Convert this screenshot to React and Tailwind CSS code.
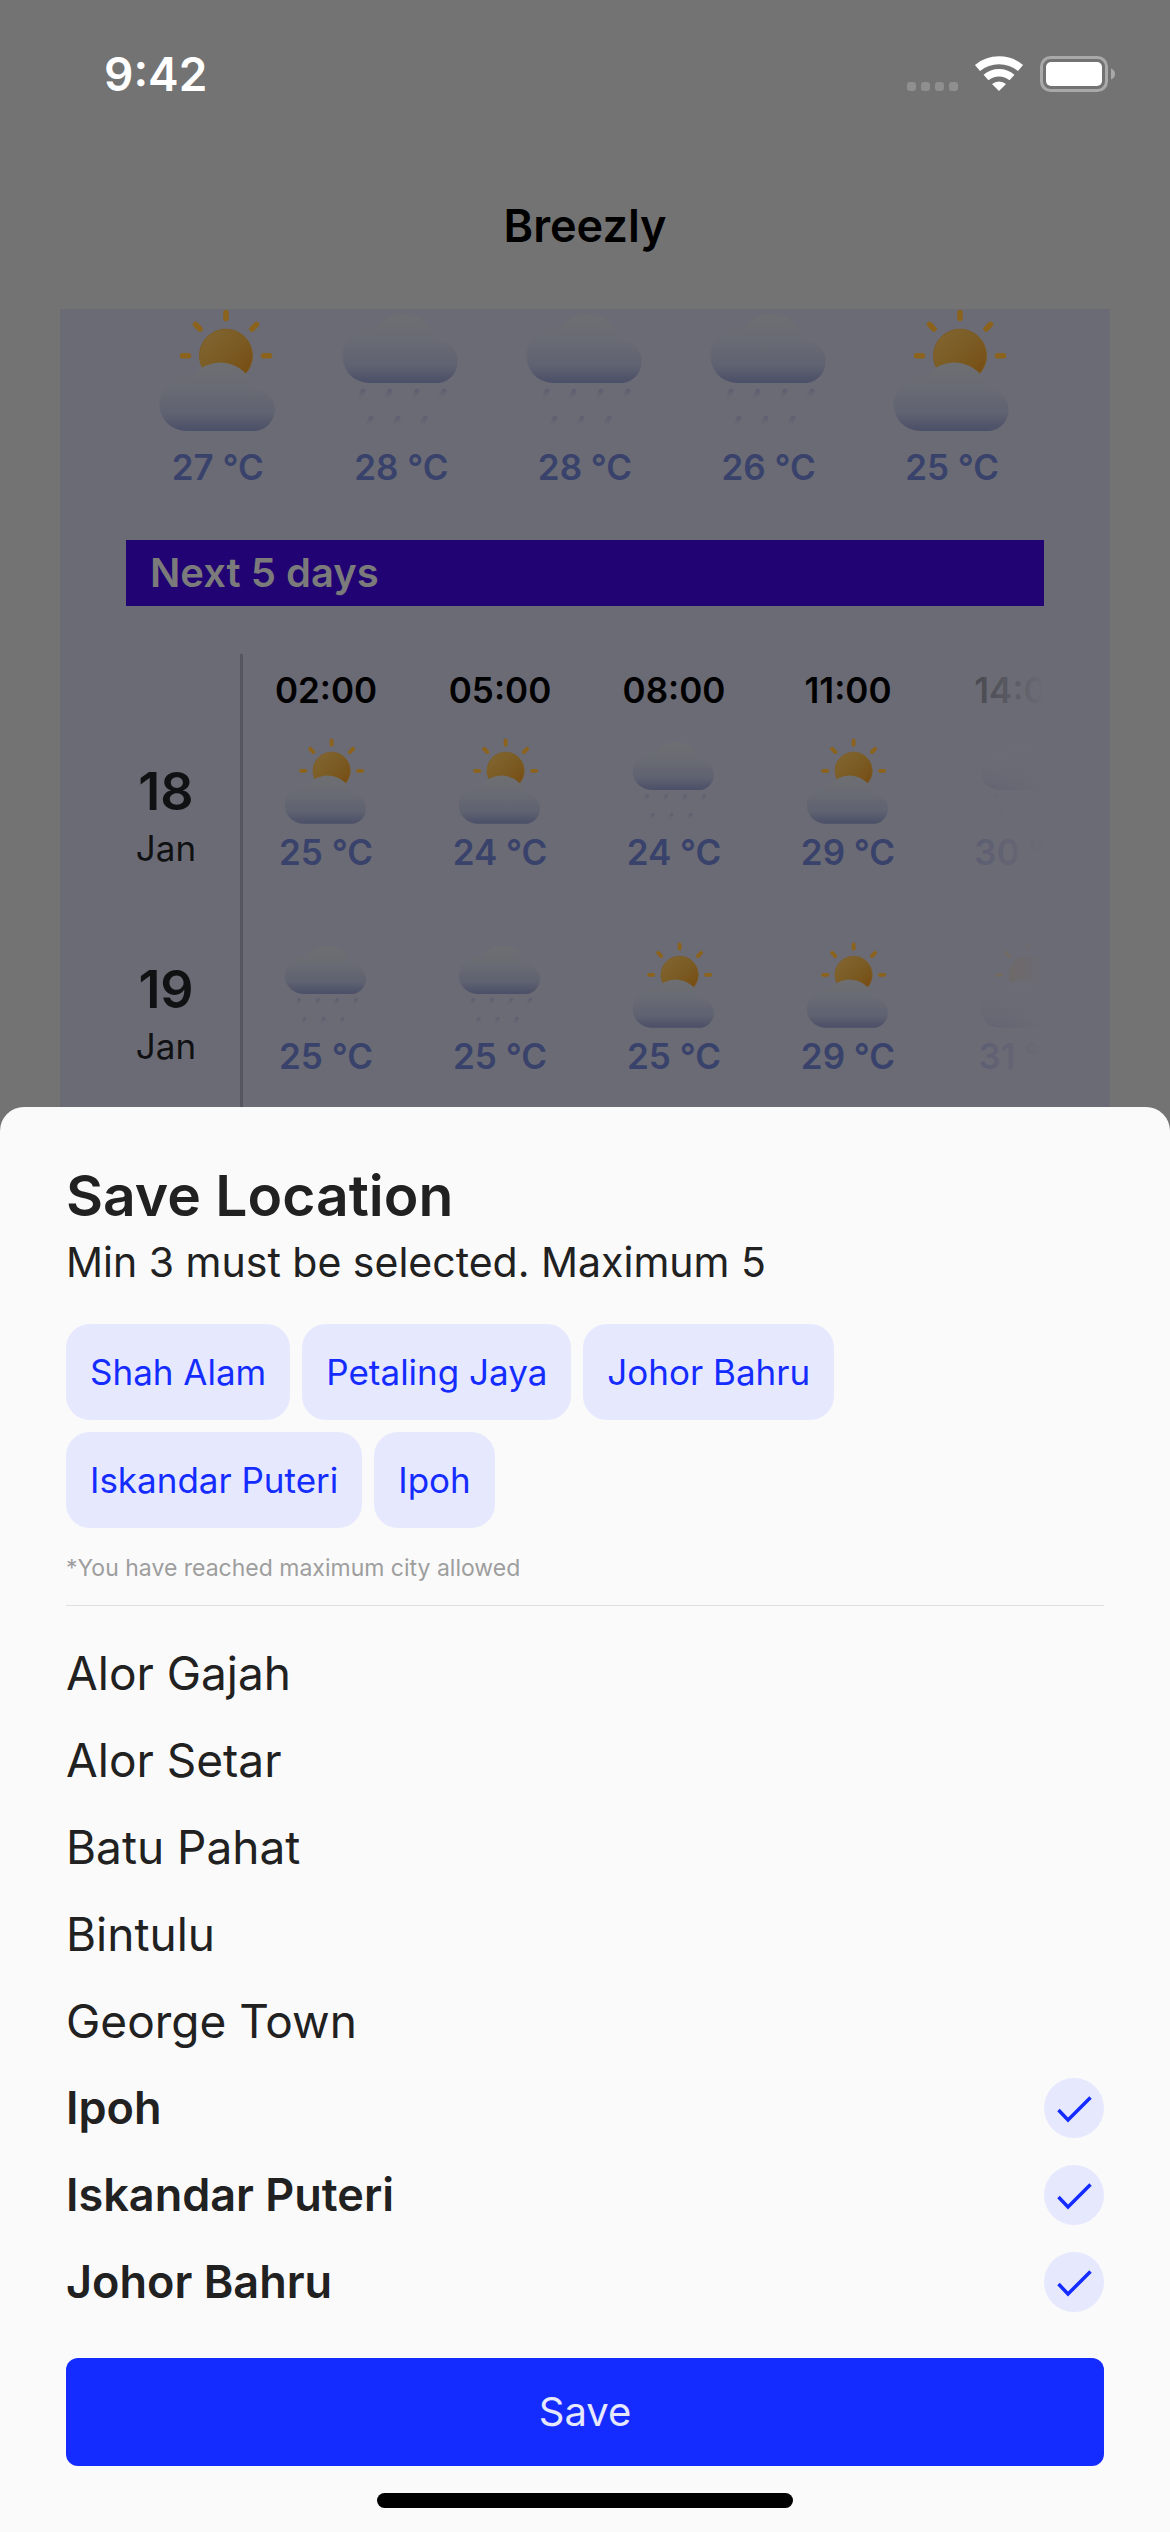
import { useState } from "react";

const HOURLY = [
  { icon: "sun", temp: "27 °C" },
  { icon: "rain", temp: "28 °C" },
  { icon: "rain", temp: "28 °C" },
  { icon: "rain", temp: "26 °C" },
  { icon: "sun", temp: "25 °C" },
];

const TIMES = ["02:00", "05:00", "08:00", "11:00", "14:00"];

const DAYS = [
  {
    day: "18",
    month: "Jan",
    slots: [
      { icon: "sun", temp: "25 °C" },
      { icon: "sun", temp: "24 °C" },
      { icon: "rain", temp: "24 °C" },
      { icon: "sun", temp: "29 °C" },
      { icon: "rain", temp: "30 °C" },
    ],
  },
  {
    day: "19",
    month: "Jan",
    slots: [
      { icon: "rain", temp: "25 °C" },
      { icon: "rain", temp: "25 °C" },
      { icon: "sun", temp: "25 °C" },
      { icon: "sun", temp: "29 °C" },
      { icon: "sun", temp: "31 °C" },
    ],
  },
];

const CITIES = [
  "Alor Gajah",
  "Alor Setar",
  "Batu Pahat",
  "Bintulu",
  "George Town",
  "Ipoh",
  "Iskandar Puteri",
  "Johor Bahru",
];

const MAX_CITIES = 5;

function GradientDefs() {
  return (
    <svg className="absolute h-0 w-0" aria-hidden="true">
      <defs>
        <linearGradient id="cloud" gradientUnits="userSpaceOnUse" x1="0" y1="52" x2="0" y2="122">
          <stop offset="0" stopColor="#6e6f72" />
          <stop offset="0.45" stopColor="#676a73" />
          <stop offset="0.75" stopColor="#5f6270" />
          <stop offset="1" stopColor="#4b4f68" />
        </linearGradient>
        <linearGradient id="sun" gradientUnits="userSpaceOnUse" x1="52" y1="25" x2="92" y2="68">
          <stop offset="0" stopColor="#80642f" />
          <stop offset="0.55" stopColor="#7a5a22" />
          <stop offset="1" stopColor="#774c12" />
        </linearGradient>
        <linearGradient id="drop" x1="0" y1="0" x2="0" y2="1">
          <stop offset="0" stopColor="#5f6171" />
          <stop offset="1" stopColor="#6a6a74" stopOpacity="0.2" />
        </linearGradient>
      </defs>
    </svg>
  );
}

function Cloud() {
  return (
    <g fill="url(#cloud)">
      <path d="M32 122A27 27 0 1 1 37.500 68.500A35 35 0 0 1 100 79A21.600 21.600 0 0 1 102 122Z" />
    </g>
  );
}

function WeatherIcon({ kind, className }) {
  if (kind === "sun") {
    return (
      <svg viewBox="0 0 128 128" className={className} role="img" aria-label="Partly cloudy">
        <g stroke="#8b631c" strokeWidth="5.500" strokeLinecap="round">
          <path d="M72 3.500V9.500M28.500 46.700H34.500M109.500 46.700H115.500M41.500 15.500L46 20M102.500 15.500L98 20" />
        </g>
        <circle cx="72" cy="46.700" r="26.500" fill="url(#sun)" stroke="#7e5c22" />
        <Cloud />
      </svg>
    );
  }
  return (
    <svg viewBox="0 0 128 128" className={className} role="img" aria-label="Rain">
      <g transform="translate(0 -48)">
        <Cloud />
      </g>
      <g fill="none" strokeWidth="5" strokeLinecap="round">
        <path stroke="url(#drop)" d="M26 82L22 91M53 82L49 91M80 82L76 91M107 82L103 91" />
        <path stroke="url(#drop)" d="M34 109L30 118M61 109L57 118M88 109L84 118" />
      </g>
    </svg>
  );
}

function StatusBar() {
  return (
    <header className="flex h-[148px] items-center justify-between pl-[104px] pr-[54px]">
      <time className="text-[46px] font-semibold leading-[56px] text-white">9:42</time>
      <div className="flex items-center">
        <svg viewBox="0 0 210 40" className="h-10 w-[210px]" role="img" aria-label="Wi-Fi on, battery full">
          <g fill="#8f8f8f">
            <rect x="1" y="28" width="9" height="9" rx="3" />
            <rect x="15" y="28" width="9" height="9" rx="3" />
            <rect x="29" y="28" width="9" height="9" rx="3" />
            <rect x="43" y="28" width="9" height="9" rx="3" />
          </g>
          <g fill="none" stroke="#fff">
            <path d="M71.500 14A34 34 0 0 1 114.500 14" strokeWidth="8" />
            <path d="M80 23.500A20 20 0 0 1 106 23.500" strokeWidth="7.500" />
          </g>
          <path d="M93 37L86 30A11 11 0 0 1 100 30Z" fill="#fff" />
          <rect x="135.500" y="3.500" width="65" height="33" rx="9" fill="none" stroke="#a9a9a9" strokeWidth="3" />
          <rect x="140" y="8" width="56" height="24" rx="5" fill="#fff" />
          <path d="M205 14.500Q209 16 209 20T205 25.500Z" fill="#a9a9a9" />
        </svg>
      </div>
    </header>
  );
}

function Forecast() {
  return (
    <main className="mx-[60px] grow bg-[#6b6b75] px-[66px]">
      <ul className="grid grid-cols-5">
        {HOURLY.map((slot, i) => (
          <li key={i} className="flex flex-col items-center">
            <WeatherIcon kind={slot.icon} className="size-32" />
            <span className="pt-1 text-[35px] font-semibold leading-[52px] text-[#39426b]">{slot.temp}</span>
          </li>
        ))}
      </ul>

      <h2 className="mt-[47px] bg-[#220373] px-6 text-[40px] font-semibold leading-[66px] text-[#7b7b7b]">
        Next 5 days
      </h2>

      <div className="mt-12 flex">
        <ul className="flex w-[114px] shrink-0 flex-col gap-[86px] pr-[34px] pt-[104px] text-center text-[#101112]">
          {DAYS.map((d) => (
            <li key={d.day} className="flex flex-col">
              <span className="text-[52px] font-semibold leading-[68px]">{d.day}</span>
              <span className="text-[35px] leading-[44px]">{d.month}</span>
            </li>
          ))}
        </ul>
        <div className="relative grow overflow-hidden border-l-3 border-[#55565f]">
          <table className="w-[870px] table-fixed border-collapse">
            <thead>
              <tr>
                {TIMES.map((t) => (
                  <th key={t} scope="col" className="pt-2 pr-2 pb-[18px] text-[35px] font-semibold leading-[56px] text-black">
                    {t}
                  </th>
                ))}
              </tr>
            </thead>
            <tbody>
              {DAYS.map((d) => (
                <tr key={d.day} className="group">
                  {d.slots.map((slot, i) => (
                    <td key={i} className="pt-[2px] pr-2 pb-16 align-top group-last:pb-[27px]">
                      <div className="flex flex-col items-center">
                        <WeatherIcon kind={slot.icon} className="size-[90px]" />
                        <span className="text-[35px] font-semibold leading-[48px] text-[#39426b]">{slot.temp}</span>
                      </div>
                    </td>
                  ))}
                </tr>
              ))}
            </tbody>
          </table>
          <div className="absolute inset-y-0 right-0 w-[86px] bg-linear-to-r from-[#6b6b75]/60 to-[#6b6b75]" />
        </div>
      </div>
    </main>
  );
}

function CityRow({ city, checked, onToggle }) {
  return (
    <li>
      <label className="flex h-[60px] items-center justify-between text-[#212121]">
        <span className={checked ? "text-[45px] font-semibold leading-[60px]" : "text-[46px] leading-[60px]"}>{city}</span>
        <span className="grid size-[60px] place-items-center">
          <input
            type="checkbox"
            checked={checked}
            onChange={onToggle}
            className="peer col-start-1 row-start-1 size-[60px] appearance-none rounded-full checked:bg-[#e6e8fe]"
          />
          <svg viewBox="0 0 60 60" className="pointer-events-none invisible col-start-1 row-start-1 size-[60px] peer-checked:visible" aria-hidden="true">
            <path d="M14.500 32L24 42L46.500 19.500" fill="none" stroke="#142cff" strokeWidth="3.500" />
          </svg>
        </span>
      </label>
    </li>
  );
}

function SaveLocationSheet() {
  const [selected, setSelected] = useState(["Shah Alam", "Petaling Jaya", "Johor Bahru", "Iskandar Puteri", "Ipoh"]);

  const toggle = (city) =>
    setSelected((list) => {
      if (list.includes(city)) return list.filter((c) => c !== city);
      return list.length < MAX_CITIES ? [...list, city] : list;
    });

  return (
    <section aria-labelledby="sheet-title" className="rounded-t-3xl bg-[#fafafa] px-[66px] pb-6 pt-[51px]">
      <h2 id="sheet-title" className="text-[57px] font-semibold leading-[76px] text-[#212121]">
        Save Location
      </h2>
      <p className="text-[41px] leading-[56px] text-[#212121]">Min 3 must be selected. Maximum 5</p>

      <div className="mt-[34px] flex max-w-[800px] flex-wrap gap-3">
        {selected.map((city) => (
          <button
            key={city}
            type="button"
            onClick={() => toggle(city)}
            className="h-24 rounded-3xl bg-[#e6e8fe] px-6 text-[35px] leading-[48px] text-[#142cff]"
          >
            {city}
          </button>
        ))}
      </div>

      <p className="mt-6 text-[23px] leading-8 text-[#9e9e9e]">*You have reached maximum city allowed</p>
      <hr className="mt-[21px] border-t border-[#e0e0e0]" />

      <ul className="mt-[37px] flex flex-col gap-[27px]">
        {CITIES.map((city) => (
          <CityRow key={city} city={city} checked={selected.includes(city)} onToggle={() => toggle(city)} />
        ))}
      </ul>

      <button type="button" className="mt-[46px] block h-[108px] w-full rounded-xl bg-[#142cff] text-[40px] leading-[56px] text-[#e6e8fe]">
        Save
      </button>
      <div className="mx-auto mt-[27px] h-[15px] w-2/5 rounded-full bg-black" />
    </section>
  );
}

export default function App() {
  return (
    <div className="flex min-h-screen flex-col bg-[#737373] font-['Inter',sans-serif]">
      <GradientDefs />
      <StatusBar />
      <h1 className="pb-[51px] pt-[46px] text-center text-[45px] font-semibold leading-[64px] text-black">Breezly</h1>
      <Forecast />
      <SaveLocationSheet />
    </div>
  );
}
